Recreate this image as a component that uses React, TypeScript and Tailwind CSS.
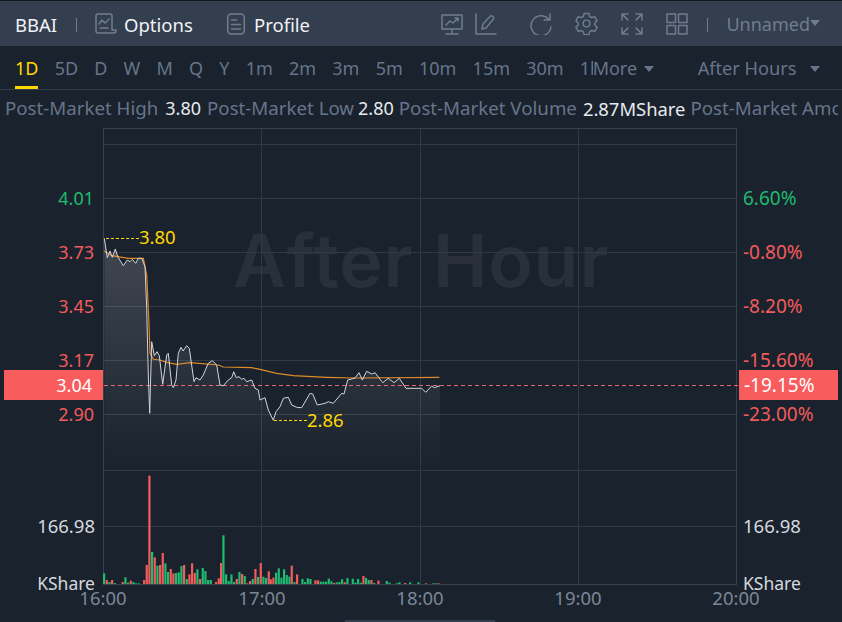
const font = "font-['Noto_Sans','Liberation_Sans',sans-serif]";

const periods = ["5D", "D", "W", "M", "Q", "Y", "1m", "2m", "3m", "5m", "10m", "15m", "30m"];

// traced from the reference, [x, y] in page px
const z3 = (p: number[]) => [95 + p[0] / 3, 225 + p[1] / 3];
const z4 = (p: number[]) => [260 + p[0] / 3, 350 + p[1] / 3];

const priceA = [[28,40],[37,98],[45,78],[52,97],[61,72],[68,95],[85,122],[97,105],[105,110],[112,103],[122,115],[130,100],[140,100],[150,125],[155,250],[160,450],[164,565],[170,350],[178,392],[186,380],[193,392],[203,478],[215,390],[220,385],[230,480],[235,488],[243,465],[250,385],[258,367],[264,378],[275,362],[283,370],[297,470],[303,458],[315,465],[325,450],[340,415],[352,407],[365,420],[375,480],[385,482],[400,465],[410,458],[416,440],[424,458],[432,455],[440,463],[447,460],[455,470],[470,465],[480,490],[490,495]];
const priceB = [[0,150],[15,143],[25,180],[40,211],[48,185],[60,170],[70,145],[85,142],[95,165],[110,172],[125,173],[150,130],[158,132],[172,165],[195,160],[205,155],[220,160],[245,130],[252,132],[263,90],[285,84],[297,68],[307,90],[320,64],[335,72],[345,68],[368,98],[385,85],[402,98],[418,85],[438,115],[485,115],[497,127],[515,108],[523,113],[540,107]];
const avgA = [[28,78],[50,92],[100,100],[145,100],[155,150],[162,300],[165,385],[175,403],[195,405],[215,412],[245,418],[285,413],[370,420],[385,426],[470,428]];
const avgB = [[0,58],[50,70],[100,77],[200,82],[280,84],[538,82]];

const toPath = (pts: number[][]) => "M" + pts.map((p) => `${p[0].toFixed(1)} ${p[1].toFixed(1)}`).join("L");
const price = [...priceA.map(z3), ...priceB.map(z4)];
const avg = [...avgA.map(z3), ...avgB.map(z4)];
const area = toPath(price) + "L440 470L104.5 470Z";

// volume bars: x, top y (zoomed px), r = red / g = green
const volA: [number, number, string][] = [[27,310,"g"],[35,330,"r"],[43,336,"g"],[51,330,"r"],[59,339,"g"],[83,336,"r"],[91,322,"g"],[99,338,"g"],[107,332,"r"],[115,336,"g"],[123,340,"g"],[131,340,"g"],[147,330,"r"],[155,285,"r"],[163,17,"r"],[171,246,"g"],[179,262,"r"],[187,287,"g"],[195,285,"r"],[203,249,"r"],[211,280,"g"],[219,306,"g"],[227,297,"r"],[235,310,"r"],[243,309,"g"],[251,307,"g"],[259,288,"g"],[267,285,"r"],[275,327,"g"],[283,313,"r"],[291,280,"r"],[299,309,"r"],[307,298,"g"],[315,327,"r"],[323,294,"g"],[331,303,"g"],[339,330,"g"],[347,330,"g"],[363,336,"r"],[371,325,"r"],[378,279,"r"],[385,196,"g"],[393,313,"g"],[401,333,"g"],[409,313,"g"],[417,336,"g"],[425,327,"r"],[433,306,"g"],[441,312,"r"],[449,318,"g"],[457,340,"r"],[465,333,"r"],[473,327,"g"],[481,297,"r"],[489,321,"g"],[497,279,"r"],[505,320,"g"],[513,324,"g"],[521,304,"r"]];
const volB: [number, number, string][] = [[2,148,"r"],[10,143,"r"],[18,128,"g"],[26,115,"g"],[34,143,"g"],[42,118,"g"],[50,135,"g"],[58,140,"g"],[65,107,"r"],[73,156,"g"],[81,133,"r"],[97,147,"g"],[105,156,"g"],[113,145,"g"],[121,147,"g"],[136,151,"r"],[144,151,"r"],[152,155,"g"],[160,155,"g"],[168,155,"g"],[176,146,"g"],[184,154,"g"],[192,159,"r"],[200,157,"g"],[208,156,"g"],[216,148,"g"],[224,157,"r"],[232,144,"g"],[248,146,"g"],[256,158,"g"],[264,147,"g"],[272,158,"g"],[280,138,"r"],[288,144,"g"],[296,150,"g"],[304,150,"r"],[312,159,"g"],[325,152,"r"],[350,153,"g"],[358,158,"g"],[380,160,"g"],[388,157,"g"],[405,159,"r"],[420,157,"g"],[445,157,"g"],[468,160,"r"],[490,160,"g"],[498,160,"g"],[506,160,"r"]];
const bars = [
  ...volA.map(([x, y, c]) => ({ x: 95 + x / 3, y: 470 + y / 3, c })),
  ...volB.map(([x, y, c]) => ({ x: 270 + x / 3, y: 530 + y / 3, c })),
];

const hLines = [144, 198, 252, 306, 360, 414, 470, 526];
const vLines = [261.5, 420.5, 578.5];

function Chart() {
  return (
    <svg width="842" height="497" viewBox="0 125 842 497" className="relative block">
      <defs>
        <linearGradient id="fade" x1="0" y1="238" x2="0" y2="470" gradientUnits="userSpaceOnUse">
          <stop offset="0" stopColor="#fff" stopOpacity="0.17" />
          <stop offset="1" stopColor="#fff" stopOpacity="0" />
        </linearGradient>
      </defs>
      {hLines.map((y) => (
        <line key={y} x1="103" x2="736" y1={y + 0.5} y2={y + 0.5} stroke="#303a46" />
      ))}
      {vLines.map((x) => (
        <line key={x} x1={x} x2={x} y1="128" y2="584" stroke="#303a46" />
      ))}
      <rect x="103.5" y="128.5" width="633" height="456" fill="none" stroke="#38424f" />
      <path d={area} fill="url(#fade)" />
      <line x1="104" x2="738" y1="385.5" y2="385.5" stroke="#e86a6a" strokeDasharray="4 3" />
      <path d={toPath(avg)} fill="none" stroke="#e08a2c" strokeWidth="1.2" />
      <path d={toPath(price)} fill="none" stroke="#d2d5d9" strokeWidth="1" />
      <line x1="106" x2="140" y1="238.5" y2="238.5" stroke="#ffd800" strokeDasharray="3 2" />
      <line x1="274" x2="308" y1="420.5" y2="420.5" stroke="#ffd800" strokeDasharray="3 2" />
      {bars.map((b, i) => (
        <rect key={i} x={b.x - 1} y={b.y} width="2.2" height={584 - b.y} fill={b.c === "r" ? "#f25b5b" : "#1fbb6f"} />
      ))}
    </svg>
  );
}

function Label({ y, x, right, cls, children }: { y: number; x: number; right?: boolean; cls: string; children: string }) {
  return (
    <span
      className={`absolute -translate-y-1/2 leading-none whitespace-nowrap ${cls}`}
      style={right ? { right: 842 - x, top: y } : { left: x, top: y }}
    >
      {children}
    </span>
  );
}

const stroke = { fill: "none", stroke: "#6f7d8f", strokeWidth: 1.5, strokeLinecap: "round", strokeLinejoin: "round" } as const;

export default function App() {
  return (
    <div className={`relative h-[622px] w-[842px] overflow-hidden bg-[#1a222d] ${font}`}>
      <header className="flex h-[46px] items-center border-t border-[#14181f] bg-[#333e4f] pt-[2px] text-[18.5px] text-[#f0f3f6]">
        <span className="ml-[15px] w-[45px]">BBAI</span>
        <span className="ml-[16px] h-[14px] w-px bg-[#6f7d8f]" />
        <svg className="ml-[18px] -mt-[2px]" width="22" height="22" viewBox="0 0 22 22" {...stroke}>
          <path d="M17 17V3a2 2 0 0 0-2-2H3a2 2 0 0 0-2 2v15a2 2 0 0 0 2 2h16a2 2 0 0 0 2-2v-1h-4" />
          <path d="M4 11l3-4 3 3 4-4M5 15h8" />
        </svg>
        <span className="ml-[7px] w-[70px]">Options</span>
        <svg className="ml-[33px] -mt-[2px]" width="18" height="22" viewBox="0 0 18 22" {...stroke}>
          <rect x="0.750" y="1" width="16.500" height="20" rx="3.500" />
          <path d="M4.500 7h5M4.500 11.500h9M4.500 16h9" />
        </svg>
        <span className="ml-[9px]">Profile</span>
        <div className="ml-auto flex items-center text-[#6f7d8f]">
          <svg className="-mt-[2px]" width="22" height="22" viewBox="0 0 22 22" {...stroke}>
            <rect x="1" y="2" width="20" height="14" />
            <path d="M5 12l4-4 3 2 5-5M14 5h3v3M11 16v5M5 21h12" />
          </svg>
          <svg className="ml-[12px] -mt-[2px]" width="22" height="22" viewBox="0 0 22 22" {...stroke}>
            <path d="M1 1v20h20M7 16l1-5L15 3.500a2 2 0 0 1 3 3L11 15z" />
          </svg>
          <svg className="ml-[33px] -mt-[2px]" width="22" height="22" viewBox="0 0 22 22" {...stroke}>
            <path d="M18.500 6A10 10 0 1 0 21 14M20 1v6h-6" />
          </svg>
          <svg className="ml-[23px] -mt-[2px]" width="23" height="23" viewBox="0 0 24 24" fill="none" stroke="#6f7d8f" strokeWidth="1.5" strokeLinejoin="round">
            <circle cx="12" cy="12" r="3.500" />
            <path d="M9.500 1.500h5l.8 3.200 2.200 1.200 3.100-1 2.500 4.300-2.400 2.200v2.400l2.400 2.200-2.500 4.300-3.100-1-2.200 1.200-.8 3.200h-5l-.8-3.200-2.200-1.200-3.100 1L.9 16l2.400-2.200v-2.400L.9 9.200l2.500-4.300 3.100 1 2.200-1.200z" />
          </svg>
          <svg className="ml-[23px] -mt-[2px]" width="22" height="22" viewBox="0 0 22 22" {...stroke}>
            <path d="M1 7V1h6M1 1l6 6M15 1h6v6M21 1l-6 6M1 15v6h6M1 21l6-6M21 15v6h-6M21 21l-6-6" />
          </svg>
          <svg className="ml-[23px] -mt-[2px]" width="22" height="22" viewBox="0 0 22 22" {...stroke} strokeLinecap="butt">
            <rect x="1" y="1" width="8.500" height="8.500" />
            <rect x="12.500" y="1" width="8.500" height="8.500" />
            <rect x="1" y="12.500" width="8.500" height="8.500" />
            <rect x="12.500" y="12.500" width="8.500" height="8.500" />
          </svg>
          <span className="ml-[19px] h-[14px] w-px bg-[#6f7d8f]" />
          <span className="ml-[18px] text-[18px]">Unnamed</span>
          <span className="mr-[22px] mt-[-4px] h-0 w-0 border-x-[5px] border-t-[6px] border-x-transparent border-t-[#6f7d8f]" />
        </div>
      </header>

      <nav className="flex h-[44px] items-center border-b border-[#333c49] pl-[15px] pt-[2px] text-[18px] text-[#66758a]">
        <span className="relative flex h-full items-center text-[#ffd800]">
          1D
          <span className="absolute bottom-0 left-0 h-[3px] w-full bg-[#ffd800]" />
        </span>
        {periods.map((p) => (
          <span key={p} className="ml-[16.200px]">{p}</span>
        ))}
        <span className="ml-[16px] w-[13px] overflow-hidden">1h</span>
        <span className="w-[44px] overflow-hidden">More</span>
        <span className="ml-[7px] h-0 w-0 border-x-[5px] border-t-[6px] border-x-transparent border-t-[#66758a]" />
        <span className="ml-[44px] text-[18.200px]">After Hours</span>
        <span className="ml-[13px] h-0 w-0 border-x-[5px] border-t-[6px] border-x-transparent border-t-[#66758a]" />
      </nav>

      <div className="relative flex h-[35px] w-[838px] items-center overflow-hidden whitespace-nowrap pl-[5px] pt-[2px] text-[18.700px] text-[#66758a]">
        Post-Market High <b className="ml-[7px] mr-[6px] text-[18px] font-normal text-[#e8eaed]">3.80</b>
        Post-Market Low <b className="ml-[4px] mr-[5px] text-[18px] font-normal text-[#e8eaed]">2.80</b>
        Post-Market Volume <b className="ml-[6px] mr-[5px] text-[18.400px] font-normal text-[#e8eaed]">2.87MShare</b>
        Post-Market Amount
      </div>

      <span className="pointer-events-none absolute left-[233px] top-[224px] font-['Inter',sans-serif] text-[73px] leading-none font-semibold tracking-[1px] whitespace-nowrap text-[#29303c]">
        After Hour
      </span>

      <Chart />

      <Label y={198} x={94} right cls="text-[18px] text-[#1fbb6f]">4.01</Label>
      <Label y={252} x={94} right cls="text-[18px] text-[#f25b5b]">3.73</Label>
      <Label y={306} x={94} right cls="text-[18px] text-[#f25b5b]">3.45</Label>
      <Label y={360} x={94} right cls="text-[18px] text-[#f25b5b]">3.17</Label>
      <Label y={414} x={94} right cls="text-[18px] text-[#f25b5b]">2.90</Label>
      <Label y={526} x={95} right cls="text-[18.500px] text-[#d5d9de]">166.98</Label>
      <Label y={584} x={95} right cls="text-[17.500px] text-[#d5d9de]">KShare</Label>

      <Label y={198} x={743} cls="text-[19px] text-[#1fbb6f]">6.60%</Label>
      <Label y={252} x={743} cls="text-[19px] text-[#f25b5b]">-0.80%</Label>
      <Label y={306} x={743} cls="text-[19px] text-[#f25b5b]">-8.20%</Label>
      <Label y={360} x={743} cls="text-[19px] text-[#f25b5b]">-15.60%</Label>
      <Label y={414} x={743} cls="text-[19px] text-[#f25b5b]">-23.00%</Label>
      <Label y={526} x={743} cls="text-[18.500px] text-[#d5d9de]">166.98</Label>
      <Label y={584} x={743} cls="text-[17.500px] text-[#d5d9de]">KShare</Label>

      <div className="absolute left-[4px] top-[370px] flex h-[30px] w-[99px] items-center justify-end bg-[#f85c5c] pr-[11px] text-[18px] text-white">3.04</div>
      <div className="absolute left-[739px] top-[370px] flex h-[30px] w-[99px] items-center bg-[#f85c5c] pl-[5px] text-[19px] text-white">-19.15%</div>

      <Label y={237} x={139} cls="text-[18.500px] text-[#ffd800]">3.80</Label>
      <Label y={420} x={307} cls="text-[18.500px] text-[#ffd800]">2.86</Label>

      {[["16:00", 103], ["17:00", 262], ["18:00", 420], ["19:00", 578], ["20:00", 736]].map(([t, x]) => (
        <span
          key={t}
          className="absolute top-[598px] -translate-x-1/2 -translate-y-1/2 text-[18.500px] leading-none text-[#7b8796]"
          style={{ left: x as number }}
        >
          {t}
        </span>
      ))}

      <div className="absolute bottom-0 left-[345px] h-[2px] w-[150px] bg-[#333e4f]" />
    </div>
  );
}
